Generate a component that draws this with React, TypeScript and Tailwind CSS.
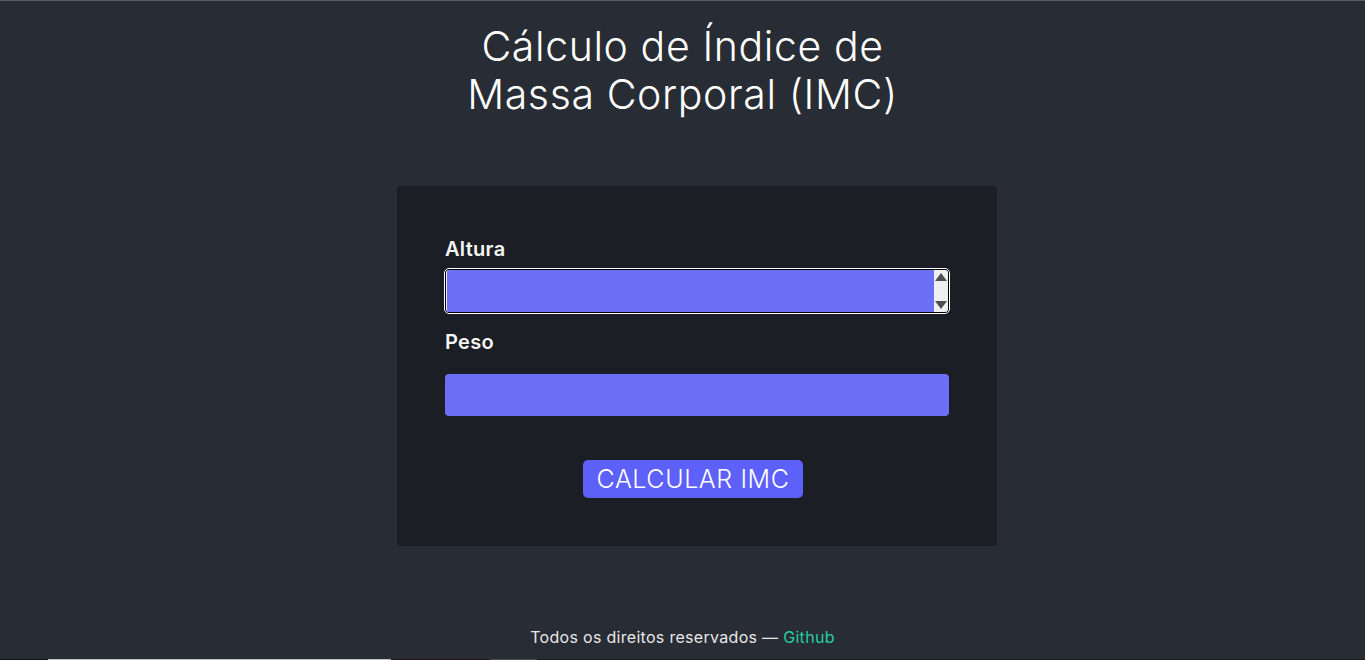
export default function App() {
  return (
    <div
      className="min-h-[660px] flex flex-col bg-[#282c34] border-t border-[#5c5c5c] text-white"
      style={{ fontFamily: "Inter, 'Open Sans', sans-serif" }}
    >
      <h1 className="mt-[21px] mx-auto w-[460px] text-center text-[41px] leading-[48px] font-light tracking-[0.6px]">
        Cálculo de Índice de Massa Corporal (IMC)
      </h1>

      <main className="mt-[68px] ml-[397px] w-[600px] h-[360px] rounded-[4px] bg-[#1b1e25] px-12 pt-[49px]">
        <label className="block text-[20px] leading-[28px] font-semibold tracking-[0.3px] text-[#f5f5f5]">Altura</label>
        <div className="mt-[5px] -mx-px rounded-[5px] border border-white bg-black p-px">
          <div className="flex h-[42px] rounded-[3px] bg-[#6b6ff8] border-l border-[#e8e8ff] overflow-hidden">
            <div className="flex-1" />
            <div className="w-[14px] bg-[#efefef] flex flex-col justify-between items-center py-[3px]">
              <svg width="12" height="8" viewBox="0 0 12 8">
                <path d="M6 0 L12 8 L0 8 Z" fill="#505050" />
              </svg>
              <svg width="12" height="8" viewBox="0 0 12 8">
                <path d="M0 0 L12 0 L6 8 Z" fill="#505050" />
              </svg>
            </div>
          </div>
        </div>

        <label className="block mt-[14px] text-[20px] leading-[28px] font-semibold tracking-[0.3px] text-[#f5f5f5]">Peso</label>
        <div className="mt-[18px] h-[42px] rounded-[4px] bg-[#6b6ff8]" />

        <div className="mt-[44px] pr-2 flex justify-center">
          <button className="w-[220px] h-[38px] rounded-[5px] bg-[#5d60f9] text-[25px] leading-none font-light text-white tracking-[0.6px]">
            CALCULAR IMC
          </button>
        </div>
      </main>

      <footer className="mt-auto pb-[12px] text-center text-[16px] leading-[20px] tracking-[0.3px] text-[#e8e8e8]">
        Todos os direitos reservados — <a className="text-[#22cda2]">Github</a>
      </footer>

      <div className="flex h-px">
        <div className="w-[48px] bg-[#151515]" />
        <div className="w-[343px] bg-[#bdbdbd]" />
        <div className="w-[99px] bg-[#241a1c]" />
        <div className="w-[47px] bg-[#4a4a4a]" />
        <div className="flex-1 bg-[#1a1a1a]" />
      </div>
    </div>
  );
}
